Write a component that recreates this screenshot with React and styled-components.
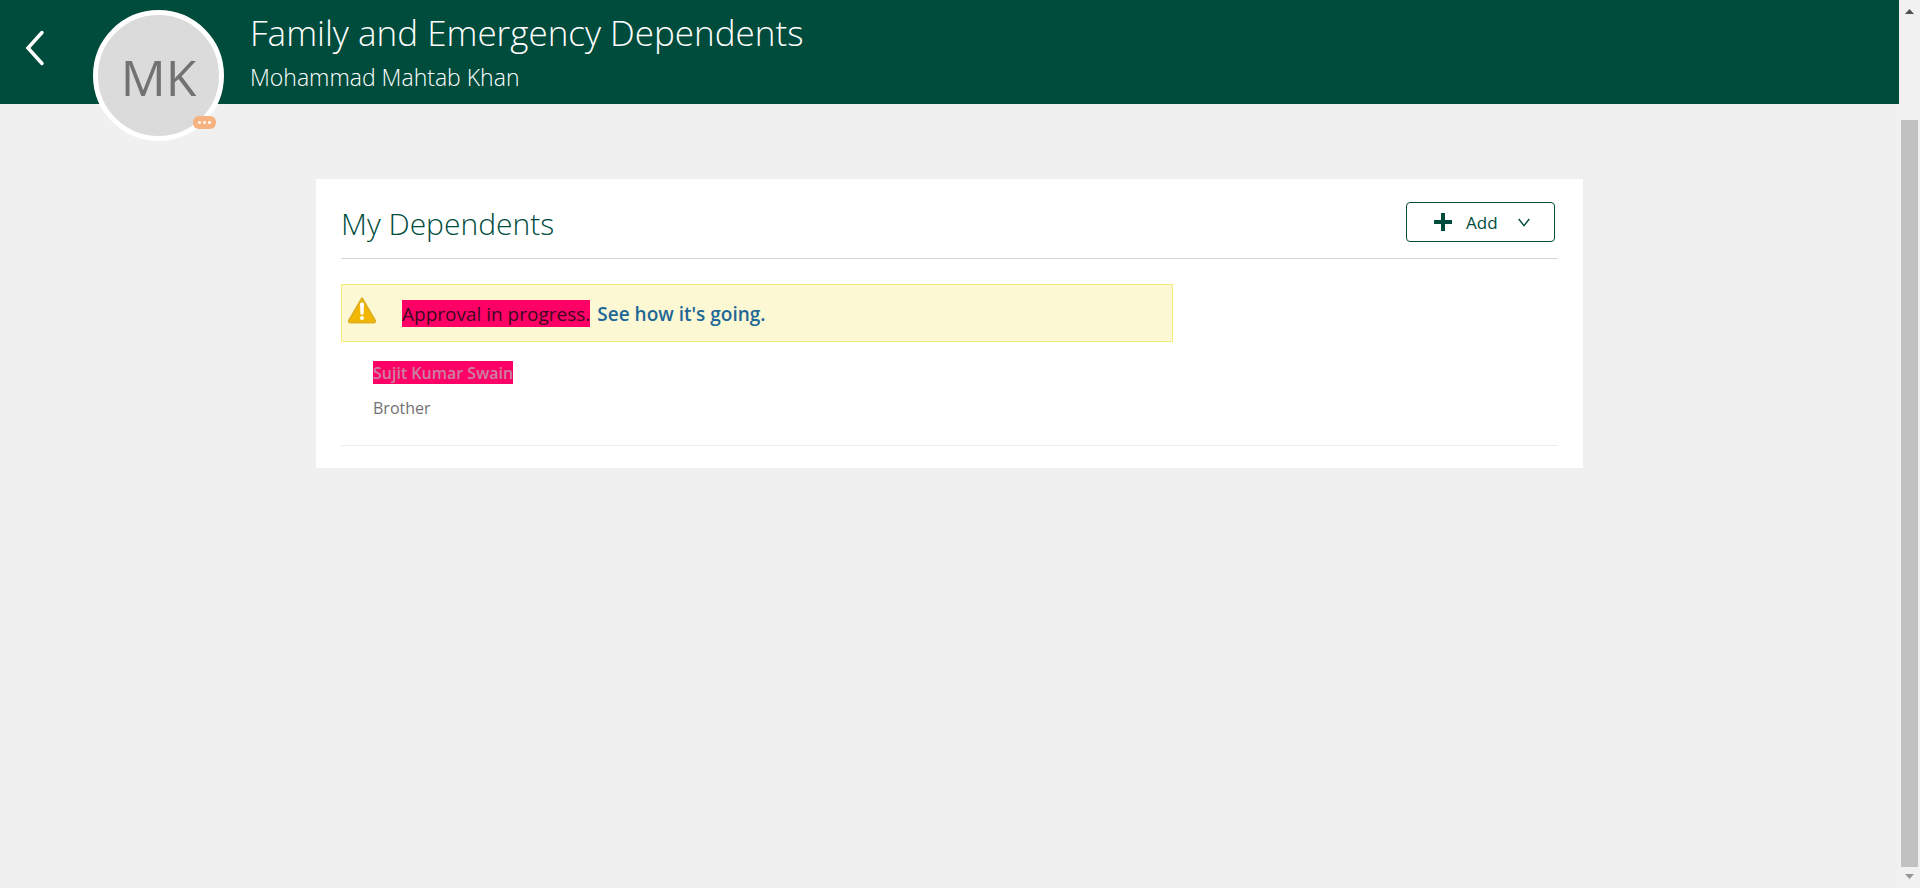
import React from "react";
import styled, { createGlobalStyle } from "styled-components";

const GlobalStyle = createGlobalStyle`
  *, *::before, *::after { box-sizing: border-box; }
  body {
    margin: 0;
    background: #f0f0f0;
    font-family: "Open Sans", "Noto Sans", sans-serif;
    color: #333;
  }
  h1, h2, p, ul { margin: 0; padding: 0; font-weight: 400; }
`;

const Shell = styled.div`
  display: flex;
  min-height: 100vh;
`;

const Page = styled.div`
  flex: 1;
  min-width: 0;
`;

const Header = styled.header`
  display: flex;
  align-items: flex-start;
  height: 104px;
  background: #004c3c;
  color: #fff;
`;

const BackButton = styled.button`
  width: 40px;
  height: 40px;
  margin: 28px 38px 0 15px;
  padding: 0;
  border: 0;
  background: none;
  color: inherit;
  cursor: pointer;
  svg { display: block; }
`;

const Avatar = styled.div`
  position: relative;
  flex: none;
  display: flex;
  align-items: center;
  justify-content: center;
  width: 131px;
  height: 131px;
  margin-top: 10px;
  padding-top: 2px;
  border: 5px solid #fff;
  border-radius: 50%;
  background: #dbdbdb;
  color: #727272;
  font-size: 50px;
  line-height: 60px;
`;

const PresenceBadge = styled.button`
  position: absolute;
  right: 3px;
  bottom: 7px;
  display: flex;
  align-items: center;
  justify-content: center;
  gap: 2px;
  width: 23px;
  height: 13px;
  padding: 0;
  border: 0;
  border-radius: 6px;
  background: #f6b37f;
`;

const Dot = styled.span`
  width: 3px;
  height: 3px;
  border-radius: 1px;
  background: #fff3e8;
`;

const Titles = styled.div`
  padding: 9px 0 0 26px;
  white-space: nowrap;
`;

const PageTitle = styled.h1`
  font-size: 35px;
  font-weight: 300;
  line-height: 48px;
`;

const PersonName = styled.p`
  font-size: 23px;
  font-weight: 300;
  line-height: 40px;
`;

const Card = styled.section`
  width: calc(100% - 48px);
  max-width: 1267px;
  margin: 75px auto 40px;
  padding: 23px 25px 22px;
  background: #fff;
`;

const CardHeader = styled.div`
  display: flex;
  align-items: center;
  justify-content: space-between;
  padding: 0 3px 16px 0;
  border-bottom: 1px solid #d3d7d6;
`;

const CardTitle = styled.h2`
  padding-top: 4px;
  color: #004c3c;
  font-size: 30px;
  font-weight: 300;
  line-height: 36px;
`;

const AddButton = styled.button`
  display: flex;
  align-items: center;
  width: 149px;
  height: 40px;
  padding: 0 24px 0 27px;
  border: 1px solid #004c3c;
  border-radius: 4px;
  background: #fff;
  color: #004c3c;
  font: 500 17px "Open Sans", "Noto Sans", sans-serif;
  cursor: pointer;
  span { flex: 1; padding-left: 14px; text-align: left; }
`;

const Notice = styled.div`
  display: flex;
  align-items: flex-start;
  max-width: 832px;
  height: 58px;
  margin-top: 25px;
  padding: 11px 5px;
  border: 1px solid #f3ec78;
  background: #fcf8d4;
  font-size: 19px;
  line-height: 25px;
  svg { flex: none; }
  p { padding: 4px 0 0 25px; }
`;

const Mark = styled.mark`
  display: inline-block;
  padding-top: 2px;
  background: #ff0066;
  color: ${(p) => p.$color};
`;

const NoticeLink = styled.a`
  margin-left: 7px;
  color: #1f6796;
  font-weight: 600;
  text-decoration: none;
`;

const List = styled.ul`
  list-style: none;
`;

const Dependent = styled.li`
  padding: 19px 32px 25px;
  border-bottom: 1px solid #ececec;
  font-size: 16px;
`;

const DependentName = styled.p`
  display: flex;
  font-weight: 600;
  line-height: 21px;
`;

const Relation = styled.p`
  padding-top: 12px;
  color: #727272;
  line-height: 24px;
`;

const ScrollRail = styled.aside`
  position: sticky;
  top: 0;
  display: flex;
  flex-direction: column;
  align-items: center;
  width: 21px;
  height: 100vh;
  padding: 9px 2px 9px;
  background: #f1f1f1;
  svg { display: block; flex: none; }
`;

const ScrollThumb = styled.div`
  flex: 1;
  width: 17px;
  margin: 106px 0 7px;
  background: #c1c1c1;
`;

function Arrow({ up }) {
  return (
    <svg width="9" height="5" viewBox="0 0 9 5" aria-hidden="true">
      <path d={up ? "M0 5 4.500 0 9 5Z" : "M0 0 4.500 5 9 0Z"} fill={up ? "#505050" : "#979797"} />
    </svg>
  );
}

const dependents = [{ name: "Sujit Kumar Swain", relation: "Brother" }];

export default function App() {
  return (
    <>
      <GlobalStyle />
      <Shell>
        <Page>
          <Header>
            <BackButton aria-label="Back">
              <svg width="40" height="40" viewBox="0 0 40 40" fill="none" stroke="currentColor" strokeWidth="3.500" strokeLinecap="round">
                <path d="M27 4.500 13 20 27 35.500" />
              </svg>
            </BackButton>
            <Avatar>
              MK
              <PresenceBadge aria-label="More actions">
                <Dot />
                <Dot />
                <Dot />
              </PresenceBadge>
            </Avatar>
            <Titles>
              <PageTitle>Family and Emergency Dependents</PageTitle>
              <PersonName>Mohammad Mahtab Khan</PersonName>
            </Titles>
          </Header>
          <main>
            <Card>
              <CardHeader>
                <CardTitle>My Dependents</CardTitle>
                <AddButton>
                  <svg width="18" height="18" viewBox="0 0 18 18" aria-hidden="true">
                    <path d="M7 0h4v7h7v4h-7v7H7v-7H0V7h7Z" fill="currentColor" />
                  </svg>
                  <span>Add</span>
                  <svg width="12" height="9" viewBox="0 0 12 9" fill="none" stroke="currentColor" strokeWidth="1.400" aria-hidden="true">
                    <path d="M.7 1 6 7.600 11.300 1" />
                  </svg>
                </AddButton>
              </CardHeader>
              <Notice role="status">
                <svg width="30" height="28" viewBox="0 0 30 28" aria-hidden="true">
                  <path d="M15 2.200 28 24.500Q28.500 26.500 26.500 26.500H3.500Q1.500 26.500 2 24.500Z" fill="#f2b705" stroke="#dfb01c" strokeWidth="2" strokeLinejoin="round" />
                  <path d="M13 7.500Q15 5.500 17 7.500L16.500 18.500H13.500Z" fill="#fff" />
                  <circle cx="15" cy="22" r="2" fill="#fff" />
                </svg>
                <p>
                  <Mark $color="#3d0a1e">Approval in progress.</Mark>
                  <NoticeLink href="#status">See how it's going.</NoticeLink>
                </p>
              </Notice>
              <List>
                {dependents.map((d) => (
                  <Dependent key={d.name}>
                    <DependentName>
                      <Mark $color="#c982a2">{d.name}</Mark>
                    </DependentName>
                    <Relation>{d.relation}</Relation>
                  </Dependent>
                ))}
              </List>
            </Card>
          </main>
        </Page>
        <ScrollRail aria-hidden="true">
          <Arrow up />
          <ScrollThumb />
          <Arrow />
        </ScrollRail>
      </Shell>
    </>
  );
}
